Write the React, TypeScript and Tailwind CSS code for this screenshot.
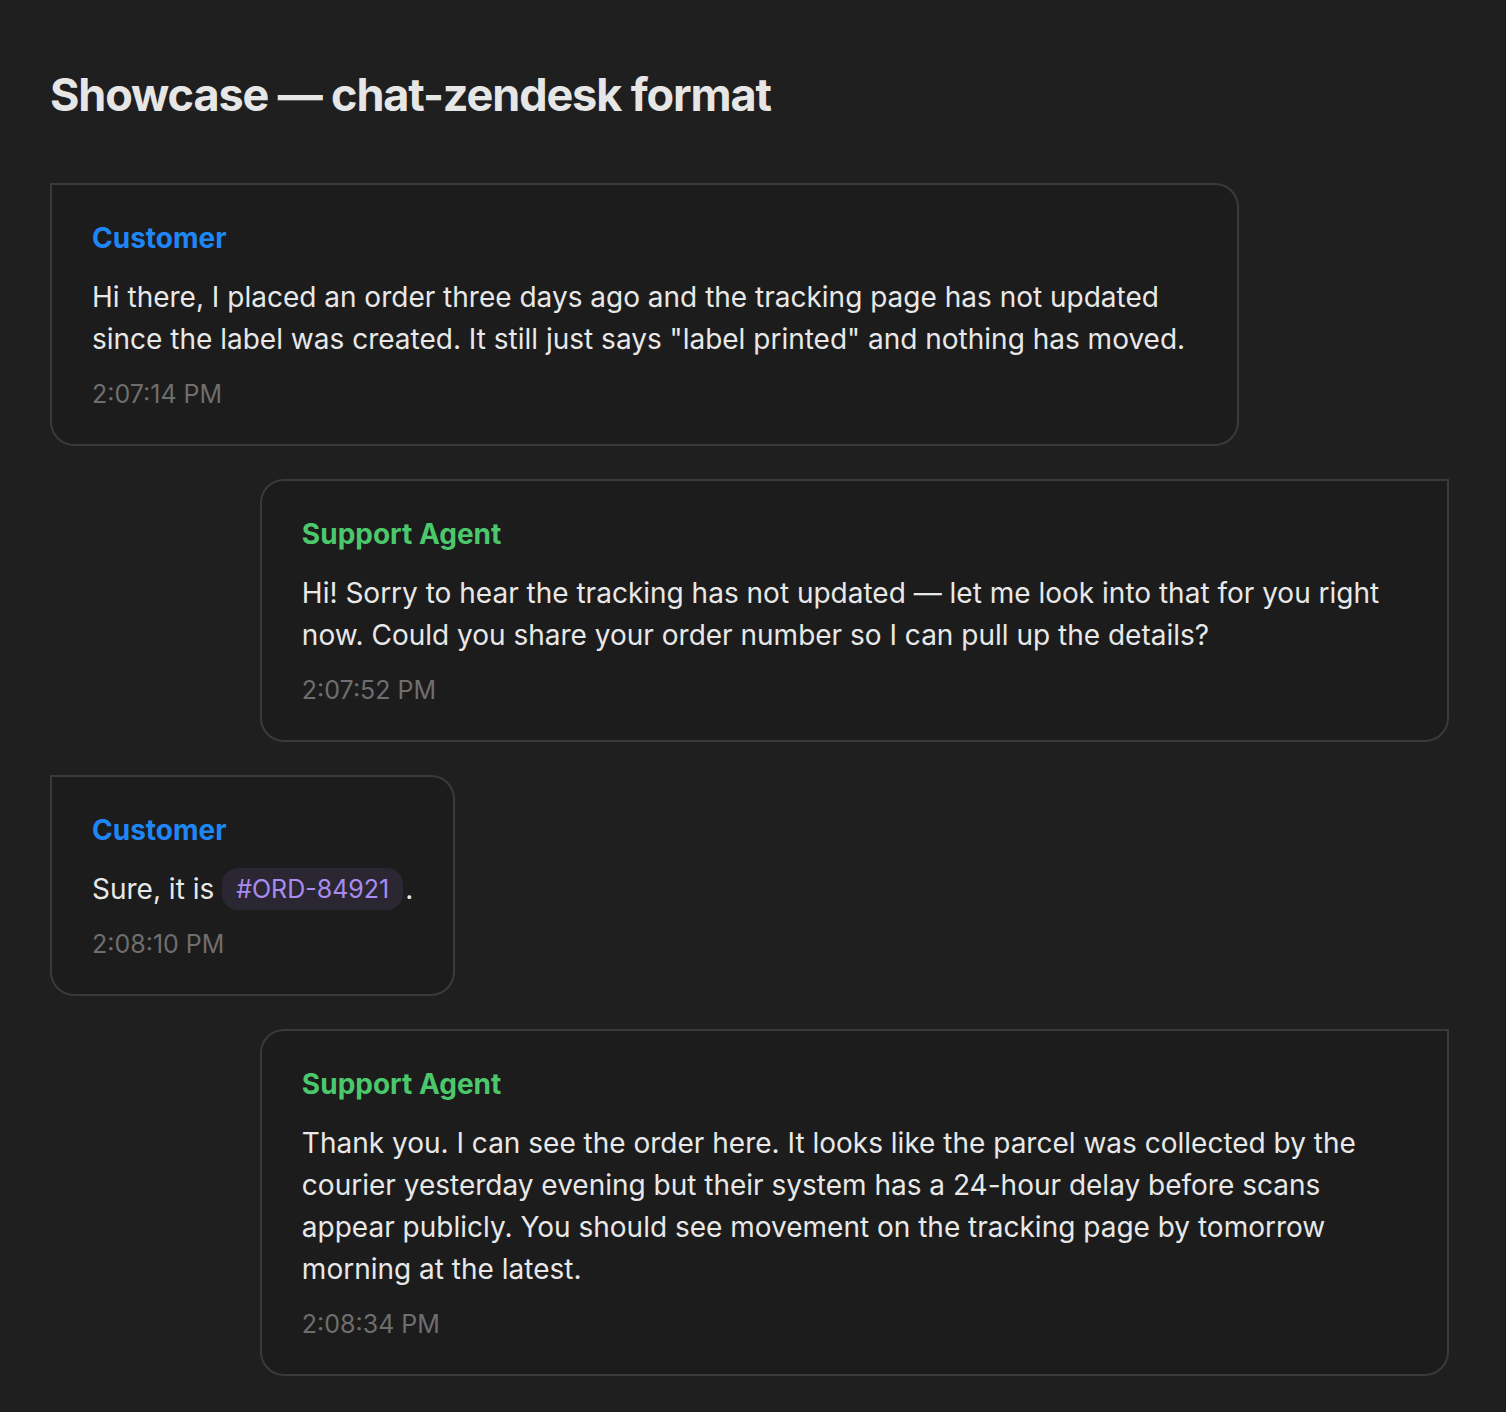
import React from "react";

type Msg = {
  role: "customer" | "agent";
  time: string;
  body: React.ReactNode;
};

const messages: Msg[] = [
  {
    role: "customer",
    time: "2:07:14 PM",
    body: (
      <>
        Hi there, I placed an order three days ago and the tracking page has not updated since the label was
        created. It still just says "label printed" and nothing has moved.
      </>
    ),
  },
  {
    role: "agent",
    time: "2:07:52 PM",
    body: (
      <>
        Hi! Sorry to hear the tracking has not updated — let me look into that for you right now. Could you share
        your order number so I can pull up the details?
      </>
    ),
  },
  {
    role: "customer",
    time: "2:08:10 PM",
    body: (
      <>
        Sure, it is{" "}
        <span className="mr-[2px] inline-block rounded-[16px] bg-[#2a2733] px-[14px] align-top text-[25px] leading-[42px] text-[#a98bf0]">
          #ORD-84921
        </span>
        .
      </>
    ),
  },
  {
    role: "agent",
    time: "2:08:34 PM",
    body: (
      <>
        Thank you. I can see the order here. It looks like the parcel was collected by the courier yesterday evening
        but their system has a 24-hour delay before scans appear publicly. You should see movement on the tracking
        page by tomorrow morning at the latest.
      </>
    ),
  },
];

function Bubble({ msg }: { msg: Msg }) {
  const isAgent = msg.role === "agent";
  return (
    <div className={isAgent ? "flex justify-end" : "flex justify-start"}>
      <div
        className={
          isAgent
            ? "max-w-[85%] rounded-tl-[24px] rounded-bl-[24px] rounded-br-[24px] border-2 border-[#3a3a3a] bg-[#1c1c1c] px-[40px] pt-[36px] pb-[32px]"
            : "max-w-[85%] rounded-tr-[24px] rounded-br-[24px] rounded-bl-[24px] border-2 border-[#3a3a3a] bg-[#1c1c1c] px-[40px] pt-[36px] pb-[32px]"
        }
      >
        <div
          className={
            isAgent
              ? "text-[28px] font-bold leading-[34px] text-[#4cc86c]"
              : "text-[28px] font-bold leading-[34px] text-[#1f86f6]"
          }
        >
          {isAgent ? "Support Agent" : "Customer"}
        </div>
        <div className="mt-[21px] text-[28px] leading-[42px] text-[#e8e8e8]">{msg.body}</div>
        <div className="mt-[16px] text-[25px] leading-[36px] text-[#6e6e6e]">{msg.time}</div>
      </div>
    </div>
  );
}

export default function App() {
  return (
    <div
      className="min-h-[1412px] bg-[#1f1f1f] pl-[50px] pr-[57px] pt-[68px] pb-[34px]"
      style={{ fontFamily: "Inter, 'Noto Sans', sans-serif" }}
    >
      <h1 className="text-[45px] font-bold leading-[54px] tracking-[-0.025em] text-[#e6e6e6]">
        Showcase — chat-zendesk format
      </h1>
      <div className="mt-[61px] flex flex-col gap-[33px]">
        {messages.map((m, i) => (
          <Bubble key={i} msg={m} />
        ))}
      </div>
    </div>
  );
}
